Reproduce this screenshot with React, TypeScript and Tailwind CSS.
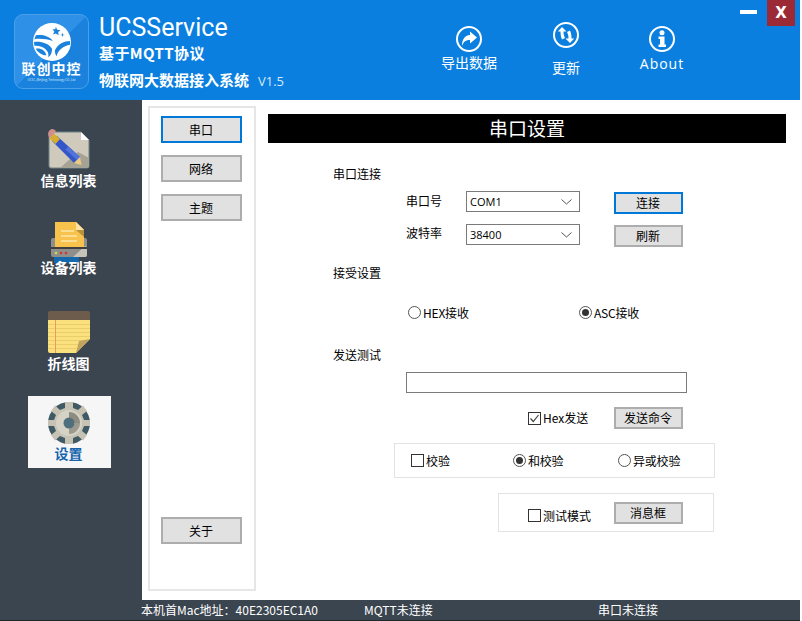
import type { ReactNode } from 'react';

const cjk = "font-['Noto_Sans_CJK_SC',sans-serif]";
const latin = "font-['Open_Sans','Noto_Sans_CJK_SC',sans-serif]";

const FormButton = ({ children, active, className = '' }: { children: ReactNode; active?: boolean; className?: string }) => (
  <div
    className={`flex items-center justify-center bg-[#e1e1e1] text-[12px] text-black leading-none border-2 pr-px ${
      active ? 'border-[#0078d7]' : 'border-[#adadad]'
    } ${className}`}
  >
    {children}
  </div>
);

const Radio = ({ checked, label, className = '' }: { checked?: boolean; label: string; className?: string }) => (
  <div className={`flex items-center text-[12px] leading-none text-black ${className}`}>
    <div className="w-[13px] h-[13px] rounded-full border border-[#555] flex items-center justify-center bg-white">
      {checked && <div className="w-[7px] h-[7px] rounded-full bg-[#333]" />}
    </div>
    <span className="ml-[2px] tracking-[-0.2px]">{label}</span>
  </div>
);

const Check = ({ checked, label, className = '' }: { checked?: boolean; label: string; className?: string }) => (
  <div className={`flex items-center text-[12px] leading-none text-black ${className}`}>
    <div className="w-[13px] h-[13px] border border-[#333] bg-white flex items-center justify-center">
      {checked && (
        <svg width="11" height="11" viewBox="0 0 11 11" fill="none" stroke="#444" strokeWidth="1.2">
          <path d="M1.5 5.5 L4.3 8.5 L9.5 2" />
        </svg>
      )}
    </div>
    <span className="ml-[2px]">{label}</span>
  </div>
);

const ComboBox = ({ value }: { value: string }) => (
  <div className={`w-[114px] h-[21px] border border-[#7a7a7a] bg-white flex items-center justify-between pl-[3px] pr-[7px] text-[11px] text-black ${latin}`}>
    <span className="pt-px">{value}</span>
    <svg width="11" height="6" viewBox="0 0 11 6" fill="none" stroke="#555" strokeWidth="1">
      <path d="M0.5 0.5 L5.5 5 L10.5 0.5" />
    </svg>
  </div>
);

const Logo = () => (
  <div className="w-[75px] h-[75px] rounded-[9px] border border-[#4a9fe6] bg-[linear-gradient(135deg,#2e90e6_0%,#2e90e6_50%,#1a82dd_50%,#1a82dd_100%)] flex flex-col items-center pt-[8px]">
    <svg width="38" height="38" viewBox="0 0 40 40">
      <circle cx="20" cy="20" r="20" fill="#fff" />
      <path d="M24 4 L25.5 7 L29 7.5 L26.5 9.5 L27 13 L24 11 L21 12 L22.5 9 L20.5 6.5 L23.5 6.5 Z" fill="#1a82dd" />
      <path d="M31 10 L31.5 12 L33.5 12.500 L31.5 13 L31 15 L30.5 13 L28.5 12.500 L30.5 12 Z" fill="#1a82dd" />
      <path d="M3 13 C10 12 17 14 21 19 C15 17 8 16 1.5 17 Z" fill="#1a82dd" />
      <path d="M1 20 C8 19 16 21 20 27 C20 31 19 34 16 36 C18 29 10 23 1.5 24 Z" fill="#1a82dd" />
      <path d="M3 27 C8 26 13 29 14 34 C10 34 5 31 3 27 Z" fill="#1a82dd" />
      <path d="M39 19 C33 19 26 22 23 29 C23 32 24 34 25 35 C26 29 32 24 39 23 Z" fill="#1a82dd" />
    </svg>
    <div className={`text-white text-[14px] font-bold leading-none tracking-[1px] whitespace-nowrap ${cjk}`}>联创中控</div>
    <div className="text-[#cfe6fa] text-[3px] leading-none mt-[4px] whitespace-nowrap">UCSC (Beijing) Technology CO.,Ltd</div>
  </div>
);

const HeaderAction = ({ icon, label, className = '' }: { icon: ReactNode; label: string; className?: string }) => (
  <div className={`flex flex-col items-center text-white ${className}`}>
    {icon}
    <span className={`text-[14px] leading-none whitespace-nowrap ${label === 'About' ? 'tracking-[1px] mt-px' : ''} ${latin}`}>{label}</span>
  </div>
);

const ExportIcon = () => (
  <svg width="28" height="28" viewBox="0 0 28 28">
    <circle cx="14" cy="14" r="12" fill="none" stroke="#fff" strokeWidth="2" />
    <path d="M15 6.5 L22 12.5 L15 18.5 L15 15 C11 15 8.5 16.5 7 21 C6.8 15 9.5 10.5 15 10 Z" fill="#fff" />
  </svg>
);

const RefreshIcon = () => (
  <svg width="28" height="28" viewBox="0 0 28 28">
    <circle cx="14" cy="14" r="12" fill="none" stroke="#fff" strokeWidth="2" />
    <path d="M10 6 L14.5 10.5 L11.5 10.5 C11.5 13 12 15 13 17 L10 18.5 C8.8 16 8.5 13 8.5 10.5 L5.8 10.5 Z" fill="#fff" />
    <path d="M18 22 L13.5 17.5 L16.5 17.5 C16.5 15 16 13 15 11 L18 9.5 C19.2 12 19.5 15 19.5 17.5 L22.2 17.5 Z" fill="#fff" />
  </svg>
);

const InfoIcon = () => (
  <svg width="28" height="28" viewBox="0 0 28 28">
    <circle cx="14" cy="14" r="12" fill="none" stroke="#fff" strokeWidth="2" />
    <circle cx="14" cy="7.8" r="2.5" fill="#fff" />
    <path d="M10.5 11.5 H16.5 V19.5 H18 V22 H10.5 V19.5 H12 V14 H10.5 Z" fill="#fff" />
  </svg>
);

const NoteIcon = () => (
  <svg width="42" height="44" viewBox="0 0 42 44">
    <path d="M3 4 H33 L41 12 V38 Q41 40 39 40 H3 Q1 40 1 38 V6 Q1 4 3 4 Z" fill="#cfcabb" stroke="#6f8288" />
    <path d="M12 40 L30 24 L41 30 V38 Q41 40 39 40 Z" fill="#a6a294" />
    <path d="M33 4 L41 12 H33 Z" fill="#fff" />
    <path d="M9 8 L32 29 L26 35 L4 13 Z" fill="#3456c8" />
    <path d="M20.5 18.5 L32 29 L29 32 L17.5 21.5 Z" fill="#5272dc" />
    <path d="M32 29 L33.5 37 L26 35 Z" fill="#ecca82" />
    <path d="M6 5.5 L12 11 L7.5 16 L1.5 10.5 Z" fill="#d6ad2e" />
    <path d="M1 3 Q4 -1 8 3 L5 7 L1.5 10 Q-1 6 1 3 Z" fill="#d18f8c" />
  </svg>
);

const PrinterIcon = () => (
  <svg width="40" height="42" viewBox="0 0 40 42">
    <path d="M4 16 H36 Q38 16 38 18 V33 Q38 35 36 35 H4 Q2 35 2 33 V18 Q2 16 4 16 Z" fill="#8e8e8a" />
    <path d="M24 35 L36 24 L38 25 V33 Q38 35 36 35 Z" fill="#c6c4b8" />
    <path d="M6 0 H27 L35 8 V26 H6 Z" fill="#f7c34c" />
    <path d="M27 0 L35 8 V15 L27 8 Z" fill="#b8923e" />
    <path d="M27 0 L35 8 H27 Z" fill="#fbe3a6" />
    <path d="M12 9 H25 M12 14 H28 M12 19 H28" stroke="#fde7a8" strokeWidth="1.5" />
    <rect x="2" y="25" width="36" height="2" fill="#3f3f3f" />
    <circle cx="7" cy="31" r="1.3" fill="#c6e04e" />
    <circle cx="12" cy="31" r="1.3" fill="#d8332c" />
    <circle cx="17" cy="31" r="1.3" fill="#d8332c" />
    <rect x="5" y="35" width="25" height="6" fill="#1668ad" />
  </svg>
);

const NotepadIcon = () => (
  <svg width="42" height="43" viewBox="0 0 42 43">
    <path d="M2 0 H40 Q42 0 42 2 V9 H0 V2 Q0 0 2 0 Z" fill="#6d5c4c" />
    <path d="M0 9 H42 V28 L28 42 H2 Q0 42 0 40 Z" fill="#fbe07e" />
    <path d="M0 13.5 H42 M0 17.5 H42 M0 21.500 H42 M0 25.500 H42 M0 29.500 H38 M0 33.500 H34 M0 37.500 H30" stroke="#e9c868" strokeWidth="0.8" />
    <rect x="7" y="9" width="1" height="33" fill="#ee9a5c" />
    <path d="M28 42 L31 30 L42 28 Z" fill="#bfa45e" />
  </svg>
);

const GearIcon = () => (
  <svg width="42" height="42" viewBox="0 0 42 42">
    <circle cx="21" cy="21" r="21" fill="#3f5a64" />
    <path d="M17 0 H25 V6 L30 8 L35 3.500 L39 9 L34 13 L36 18 H42 V24 H36 L34 29 L39 33 L35 38.500 L30 34 L25 36 V42 H17 V36 L12 34 L7 38.500 L3 33 L8 29 L6 24 H0 V18 H6 L8 13 L3 9 L7 3.500 L12 8 L17 6 Z" fill="#c6c3b5" />
    <circle cx="21" cy="21" r="13" fill="#d5d2c6" />
    <path d="M21 10 A11 11 0 0 1 32 21 H26 A5 5 0 0 0 21 16 Z" fill="#8e8c80" />
    <path d="M21 32 A11 11 0 0 0 32 21 H27 L21 27 Z" fill="#9c9a8e" />
    <circle cx="21" cy="21" r="5.500" fill="#4f6f7c" />
  </svg>
);

const NavItem = ({ icon, label, active, className = '' }: { icon: ReactNode; label: string; active?: boolean; className?: string }) => (
  <div className={`w-[83px] flex flex-col items-center pr-[2px] ${active ? 'bg-[#f6f6f7]' : ''} ${className}`}>
    {icon}
    <span className={`text-[14px] font-bold leading-none whitespace-nowrap ${active ? 'text-[#1565ad]' : 'text-white'} ${cjk}`}>{label}</span>
  </div>
);

export default function App() {
  return (
    <div className={`w-[802px] h-[621px] flex flex-col bg-white overflow-hidden ${cjk}`}>
      <header className="h-[100px] shrink-0 bg-[#0a7fdf] flex text-white mr-[2px]">
        <div className="pl-[14px] pt-[14px]">
          <Logo />
        </div>
        <div className="ml-[10px] w-[212px]">
          <div className="text-[25px] leading-none mt-[15px] font-['Roboto',sans-serif]">UCSService</div>
          <div className="text-[15px] font-bold leading-none mt-[5px] tracking-[0.4px]">基于MQTT协议</div>
          <div className="flex items-baseline mt-[12px] whitespace-nowrap">
            <span className="text-[15px] font-bold leading-none">物联网大数据接入系统</span>
            <span className={`ml-[9px] text-[13px] leading-none text-[#d5e9fa] ${latin}`}>V1.5</span>
          </div>
        </div>
        <HeaderAction icon={<ExportIcon />} label="导出数据" className="w-[56px] ml-[130px] pt-[25px] gap-[3px]" />
        <HeaderAction icon={<RefreshIcon />} label="更新" className="w-[56px] ml-[41px] pt-[21px] gap-[12px]" />
        <HeaderAction icon={<InfoIcon />} label="About" className="w-[56px] ml-[40px] pt-[25px] gap-[3px]" />
        <div className="ml-[50px] w-[19px] pt-[10px]">
          <div className="h-[4px] w-[17px] bg-white" />
        </div>
        <div className="ml-[8px] w-[28px] h-[26px] bg-[#9b2a36] flex items-center justify-center text-white text-[15px] font-bold leading-none font-['DejaVu_Sans',sans-serif]">
          X
        </div>
      </header>

      <div className="flex-1 flex min-h-0 pr-[2px]">
        <aside className="w-[142px] shrink-0 bg-[#3b4550] flex flex-col items-start pl-[28px]">
          <NavItem icon={<NoteIcon />} label="信息列表" className="mt-[28px] gap-[1px]" />
          <NavItem icon={<PrinterIcon />} label="设备列表" className="mt-[35px] -space-y-[4px]" />
          <NavItem icon={<NotepadIcon />} label="折线图" className="mt-[37px] gap-[2px]" />
          <NavItem icon={<GearIcon />} label="设置" active className="h-[72px] mt-[26px] pt-[6px] gap-[2px]" />
        </aside>

        <main className="flex-1 flex min-w-0 pt-[6px] pb-[9px] pl-[6px] text-[12px] text-black">
          <div className="w-[108px] shrink-0 border-2 border-[#e6e6e6] flex flex-col pl-[11px] pt-[8px] pb-[45px]">
            <FormButton active className="w-[81px] h-[27px]">串口</FormButton>
            <FormButton className="w-[81px] h-[27px] mt-[12px]">网络</FormButton>
            <FormButton className="w-[81px] h-[27px] mt-[12px]">主题</FormButton>
            <FormButton className="w-[81px] h-[27px] mt-auto">关于</FormButton>
          </div>

          <section className="flex-1 pl-[12px] pt-[8px]">
            <div className="w-[518px] h-[29px] bg-black text-white text-[19px] leading-none flex items-center justify-center pb-[3px]">串口设置</div>

            <div className="ml-[65px] mt-[25px] leading-none">串口连接</div>
            <div className="ml-[138px] mt-[11px] flex items-start">
              <div className="w-[60px] pt-[4px] leading-none">串口号</div>
              <ComboBox value="COM1" />
              <FormButton active className="w-[69px] h-[22px] ml-[34px] mt-px">连接</FormButton>
            </div>
            <div className="ml-[138px] mt-[10px] flex items-start">
              <div className="w-[60px] pt-[3px] leading-none">波特率</div>
              <ComboBox value="38400" />
              <FormButton className="w-[69px] h-[22px] ml-[34px] mt-px">刷新</FormButton>
            </div>

            <div className="ml-[65px] mt-[20px] leading-none">接受设置</div>
            <div className="ml-[140px] mt-[27px] flex">
              <Radio label="HEX接收" className="w-[171px]" />
              <Radio checked label="ASC接收" />
            </div>

            <div className="ml-[65px] mt-[30px] leading-none">发送测试</div>
            <div className="ml-[138px] mt-[11px] w-[281px] h-[21px] border border-[#7a7a7a] bg-white" />
            <div className="ml-[260px] mt-[14px] flex items-center">
              <Check checked label="Hex发送" className="w-[86px]" />
              <FormButton className="w-[69px] h-[22px]">发送命令</FormButton>
            </div>

            <div className="ml-[126px] mt-[14px] w-[321px] h-[35px] border border-[#e3e3e3] flex items-center pl-[16px]">
              <Check label="校验" className="w-[102px]" />
              <Radio checked label="和校验" className="w-[105px]" />
              <Radio label="异或校验" />
            </div>

            <div className="ml-[230px] mt-[15px] w-[216px] h-[39px] border border-[#e3e3e3] flex items-center pl-[29px]">
              <Check label="测试模式" className="w-[86px] mt-[6px]" />
              <FormButton className="w-[69px] h-[22px]">消息框</FormButton>
            </div>
          </section>
        </main>
      </div>

      <footer className="h-[21px] shrink-0 bg-[#3b4550] border-b border-[#20262c] flex items-center pl-[141px] text-[12px] leading-none text-white whitespace-nowrap mr-[2px]">
        <span className="w-[223px]">本机首Mac地址：40E2305EC1A0</span>
        <span className="w-[234px]">MQTT未连接</span>
        <span>串口未连接</span>
      </footer>
    </div>
  );
}
